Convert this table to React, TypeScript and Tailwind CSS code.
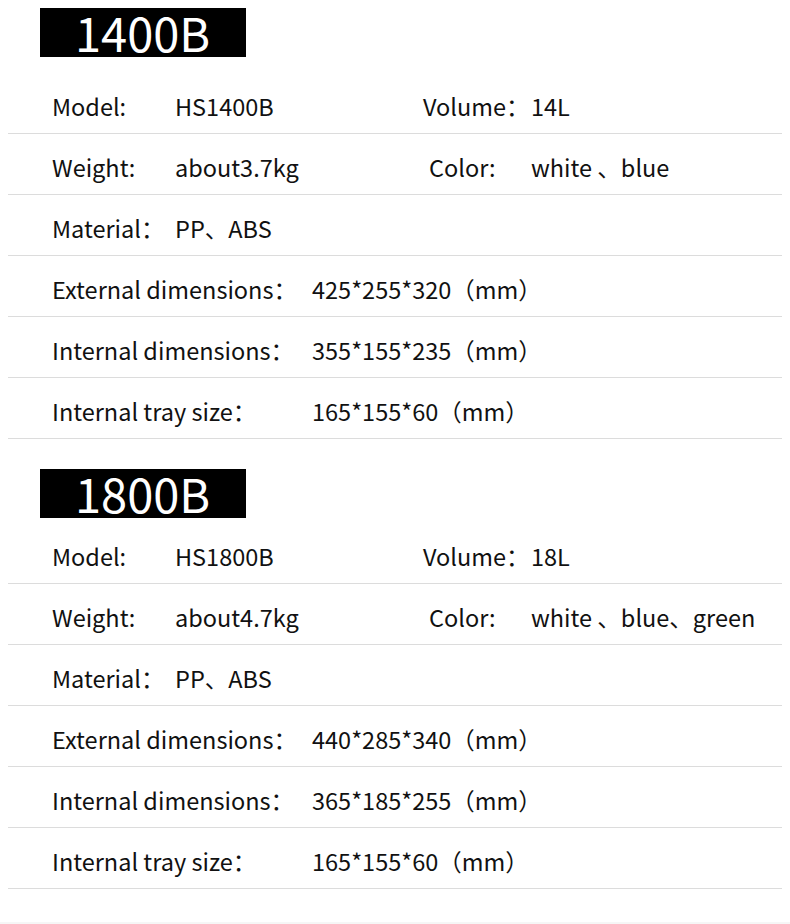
import React from "react";

type Spec = {
  title: string;
  model: string;
  volume: string;
  weight: string;
  color: string;
  external: string;
  internal: string;
  tray: string;
};

const specs: Spec[] = [
  {
    title: "1400B",
    model: "HS1400B",
    volume: "14L",
    weight: "about3.7kg",
    color: "white 、blue",
    external: "425*255*320（mm）",
    internal: "355*155*235（mm）",
    tray: "165*155*60（mm）",
  },
  {
    title: "1800B",
    model: "HS1800B",
    volume: "18L",
    weight: "about4.7kg",
    color: "white 、blue、green",
    external: "440*285*340（mm）",
    internal: "365*185*255（mm）",
    tray: "165*155*60（mm）",
  },
];

const font = { fontFamily: '"Noto Sans CJK SC", "Noto Sans", sans-serif' };

function Row({ children }: { children: React.ReactNode }) {
  return (
    <div className="ml-[8px] w-[774px] h-[61px] border-b-[1.5px] border-[#dcdcdc] flex items-center pl-[44px] pt-[8px] whitespace-nowrap">
      {children}
    </div>
  );
}

function Section({ spec, idx }: { spec: Spec; idx: number }) {
  return (
    <div>
      <div className={idx === 0 ? "pt-[8px]" : "pt-[30px]"}>
        <div className="ml-[40px] w-[206px] h-[49px] bg-black text-white flex items-center pl-[35px]">
          <span className="text-[47px] leading-none font-normal -mt-[2px]">{spec.title}</span>
        </div>
      </div>
      <div className={idx === 0 ? "h-[16px]" : "h-[5px]"} />
      <Row>
        <span className="w-[123px]">Model:</span>
        <span className="w-[248px]">{spec.model}</span>
        <span className="w-[108px]">Volume：</span>
        <span>{spec.volume}</span>
      </Row>
      <Row>
        <span className="w-[123px]">Weight:</span>
        <span className="w-[248px]">{spec.weight}</span>
        <span className="w-[108px] pl-[6px]">Color:</span>
        <span>{spec.color}</span>
      </Row>
      <Row>
        <span className="w-[123px]">Material：</span>
        <span>PP、ABS</span>
      </Row>
      <Row>
        <span className="w-[260px]">External dimensions：</span>
        <span>{spec.external}</span>
      </Row>
      <Row>
        <span className="w-[260px]">Internal dimensions：</span>
        <span>{spec.internal}</span>
      </Row>
      <Row>
        <span className="w-[260px]">Internal tray size：</span>
        <span>{spec.tray}</span>
      </Row>
    </div>
  );
}

export default function App() {
  return (
    <div className="w-[790px] h-[924px] bg-white text-[#111111] text-[23.5px] overflow-hidden" style={font}>
      {specs.map((s, i) => (
        <Section key={s.title} spec={s} idx={i} />
      ))}
      <div className="h-[33px]" />
      <div className="h-[3px] bg-[#f6f6f6]" />
    </div>
  );
}
